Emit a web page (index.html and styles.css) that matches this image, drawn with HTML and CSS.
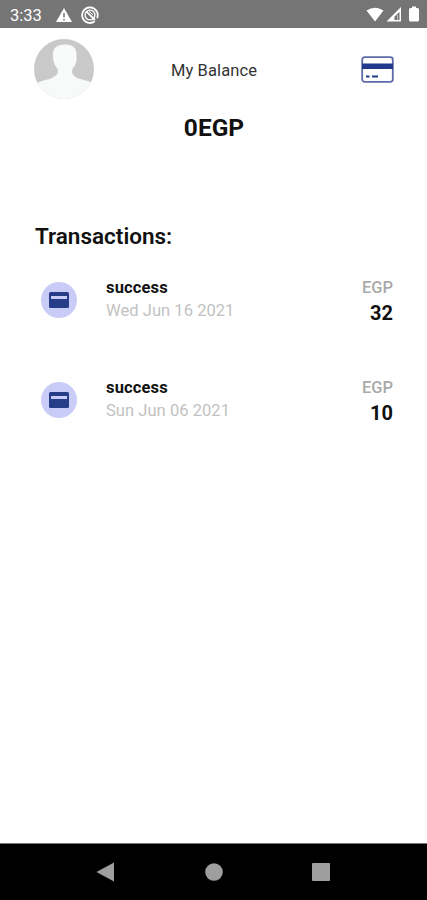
FILE: index.html
```
<!DOCTYPE html>
<html lang="en">
<head>
    <meta charset="UTF-8">
    <meta name="viewport" content="width=device-width, initial-scale=1.0">
    <title>My Balance</title>
    <link rel="stylesheet" href="styles.css">
</head>
<body>
    <div class="status-bar">
        <span class="time">3:33</span>
        <svg class="warning" width="18" height="16" viewBox="0 0 18 16">
            <path d="M9 1 L17 15 H1 Z" fill="#fff"/>
            <path d="M9 6 V10.5 M9 12 V13.5" stroke="#757575" stroke-width="1.5"/>
        </svg>
        <svg class="blocked" width="18" height="18" viewBox="0 0 18 18" fill="none" stroke="#fff">
            <path d="M13.7 15.3 A7.8 7.8 0 1 1 16.1 12.2" stroke-width="1.8"/>
            <circle cx="9" cy="9" r="4.9" stroke-width="1.4"/>
            <path d="M5.5 5.7 L14 14" stroke-width="1.8"/>
            <path d="M8 5.2 L12 8.7" stroke-width="1"/>
        </svg>
        <svg class="signals" width="54" height="18" viewBox="0 0 54 18">
            <path d="M0.5 4.5 Q9 -1 17.5 4.5 L9 15.5 Z" fill="#fff"/>
            <path d="M35 1 V15.5 H20.5 Z" fill="#fff"/>
            <path d="M33.5 6 V14 H28.5 V10.5 Z" fill="#757575"/>
            <path d="M31.5 9 V14" stroke="#bbb" stroke-width="1"/>
            <path d="M46 0.5 H50 V2 H51.5 Q53 2 53 3.5 V14 Q53 15.5 51.5 15.5 H44.5 Q43 15.5 43 14 V3.5 Q43 2 44.5 2 H46 Z" fill="#fff"/>
        </svg>
    </div>

    <main>
        <header class="header">
            <svg class="avatar" width="60" height="60" viewBox="0 0 60 60">
                <defs>
                    <clipPath id="avatarClip"><circle cx="30" cy="30" r="30"/></clipPath>
                </defs>
                <g clip-path="url(#avatarClip)">
                    <rect width="60" height="60" fill="#c9c9c9"/>
                    <path d="M0 46 C5 42 13 41 18 39 C24 36 25 33 23 29 C20 26 19 21 19 17 C18.5 9 23 5.5 31 5.5 C39 5.5 43 9 42.5 17 C43 21 42 26 39 29 C37 33 38 36 43 39 C49 41 56 42 60 45 V60 H0 Z" fill="#f8fafa"/>
                </g>
            </svg>
            <span class="title">My Balance</span>
            <svg class="card-icon" width="33" height="27" viewBox="0 0 33 27">
                <rect x="1.2" y="1.2" width="30.6" height="24.6" rx="2.5" fill="#fff" stroke="#5e6ba8" stroke-width="1.8"/>
                <rect x="1" y="7.5" width="31" height="5.5" fill="#213a8d"/>
                <path d="M5 20.5 H8.5 M11 20.5 H17" stroke="#213a8d" stroke-width="1.8"/>
            </svg>
        </header>

        <div class="balance">0EGP</div>

        <h2>Transactions:</h2>

        <div class="transaction">
            <div class="badge">
                <svg width="20" height="16" viewBox="0 0 20 16">
                    <rect width="20" height="16" rx="1.5" fill="#263d88"/>
                    <rect x="2" y="4" width="16" height="3" fill="#c9ccf6"/>
                </svg>
            </div>
            <div class="details">
                <div class="status">success</div>
                <div class="date">Wed Jun 16 2021</div>
            </div>
            <div class="amount">
                <div class="currency">EGP</div>
                <div class="value">32</div>
            </div>
        </div>

        <div class="transaction">
            <div class="badge">
                <svg width="20" height="16" viewBox="0 0 20 16">
                    <rect width="20" height="16" rx="1.5" fill="#263d88"/>
                    <rect x="2" y="4" width="16" height="3" fill="#c9ccf6"/>
                </svg>
            </div>
            <div class="details">
                <div class="status">success</div>
                <div class="date">Sun Jun 06 2021</div>
            </div>
            <div class="amount">
                <div class="currency">EGP</div>
                <div class="value">10</div>
            </div>
        </div>
    </main>

    <nav class="nav-bar">
        <svg width="20" height="20" viewBox="0 0 20 20"><path d="M0.5 10 L18 0.5 V19.5 Z" fill="#9e9e9e"/></svg>
        <svg width="20" height="20" viewBox="0 0 20 20"><circle cx="10" cy="10" r="8.8" fill="#9e9e9e"/></svg>
        <svg width="20" height="20" viewBox="0 0 20 20"><rect x="1" y="1" width="18" height="18" rx="1" fill="#9e9e9e"/></svg>
    </nav>
</body>
</html>
```
FILE: styles.css
```
* {
    box-sizing: border-box;
}
body {
    margin: 0;
    height: 900px;
    display: flex;
    flex-direction: column;
    background: #fff;
    color: #111;
    font-family: Roboto, sans-serif;
}
svg {
    display: block;
    flex-shrink: 0;
}
.status-bar {
    height: 28px;
    padding: 2px 7px 0 10px;
    display: flex;
    align-items: center;
    background: #757575;
    color: #fff;
}
.time {
    width: 45px;
    font-size: 16.5px;
}
.blocked {
    margin-left: 8px;
}
.signals {
    margin-left: auto;
}
main {
    flex: 1;
    padding: 11px 33px 0 34px;
}
.header {
    display: grid;
    grid-template-columns: 1fr auto 1fr;
    align-items: center;
    height: 60px;
}
.title {
    margin-top: 2px;
    font-size: 16.5px;
    letter-spacing: 0.1px;
    color: #333;
}
.card-icon {
    justify-self: end;
}
.balance {
    height: 30px;
    margin-top: 14px;
    text-align: center;
    font-size: 24.5px;
    line-height: 30px;
    font-weight: 700;
}
h2 {
    margin: 78px 0 0;
    padding-left: 1px;
    font-size: 22.5px;
    line-height: 30px;
    font-weight: 600;
}
.transaction {
    display: flex;
    align-items: center;
    height: 50px;
    margin-top: 24px;
}
.transaction + .transaction {
    margin-top: 50px;
}
.badge {
    display: flex;
    align-items: center;
    justify-content: center;
    width: 36px;
    height: 36px;
    margin-left: 7px;
    border-radius: 50%;
    background: #c9ccf6;
}
.details {
    flex: 1;
    margin-left: 29px;
    padding-bottom: 3px;
}
.status {
    font-size: 16.5px;
    letter-spacing: 0.15px;
    line-height: 23px;
    font-weight: 700;
}
.date {
    font-size: 16.5px;
    letter-spacing: 0.05px;
    line-height: 23px;
    color: #c2c2c2;
}
.amount {
    margin-right: 1px;
    text-align: right;
}
.currency {
    font-size: 16.5px;
    line-height: 25px;
    font-weight: 500;
    color: #aaa;
}
.value {
    font-size: 20px;
    line-height: 26px;
    font-weight: 700;
}
.nav-bar {
    height: 57px;
    padding: 0 96px;
    display: flex;
    align-items: center;
    justify-content: space-between;
    border-top: 1px solid #777;
    background: #000;
}
```
